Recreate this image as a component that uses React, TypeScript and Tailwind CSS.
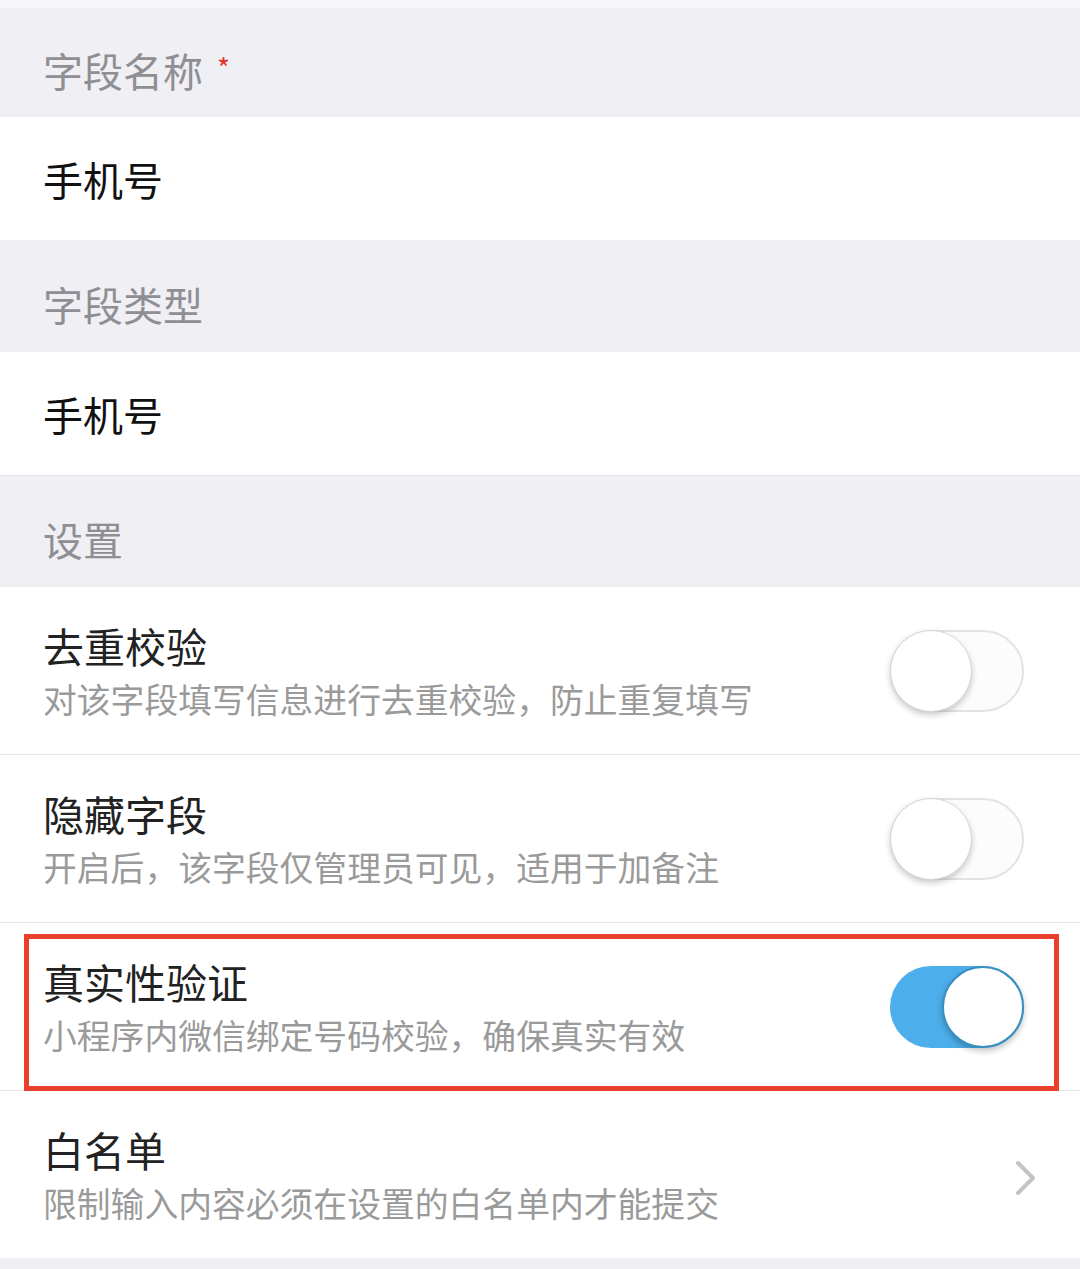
import { ReactNode } from 'react'

const font = { fontFamily: '"Noto Sans CJK SC", "Noto Sans", sans-serif' }

function SectionHeader({ children, h }: { children: ReactNode; h: string }) {
  return (
    <div className={`${h} flex items-center pt-[15px] pl-[43px] bg-[#efeff4] text-[40px] leading-[48px] text-[#8e8e93]`}>
      {children}
    </div>
  )
}

function ValueRow({ text, h }: { text: string; h: string }) {
  return (
    <div className={`${h} flex items-center pt-[1px] pl-[43px] bg-white text-[40px] leading-[48px] text-[#111]`}>
      {text}
    </div>
  )
}

function Toggle({ on }: { on: boolean }) {
  if (on) {
    return (
      <div className="relative w-[134px] h-[82px] rounded-full bg-[#4cafeb]">
        <div className="absolute right-0 top-0 w-[82px] h-[82px] rounded-full bg-white border-2 border-[#3a8fc2] shadow-[0_3px_6px_rgba(0,0,0,0.25)]" />
      </div>
    )
  }
  return (
    <div className="relative w-[134px] h-[82px] rounded-full bg-[#fcfcfc] border-2 border-[#e3e3e3]">
      <div className="absolute -left-[2px] -top-[2px] w-[82px] h-[82px] rounded-full bg-white border border-[#d8d8d8] shadow-[0_3px_6px_rgba(0,0,0,0.22)]" />
    </div>
  )
}

function SettingRow({
  title,
  desc,
  right,
  last,
  highlight,
}: {
  title: string
  desc: string
  right: ReactNode
  last?: boolean
  highlight?: boolean
}) {
  return (
    <div className={`relative bg-white flex items-start ${last ? 'h-[167px]' : 'h-[168px] border-b border-[#e6e6e6]'}`}>
      <div className="flex-1 pl-[43px] pt-[33px]">
        <div className="text-[41px] leading-[50px] text-[#222]">{title}</div>
        <div className="text-[33.8px] leading-[58px] text-[#9a9a9a] whitespace-nowrap">{desc}</div>
      </div>
      <div className="self-center pr-[56px] flex items-center">{right}</div>
      {highlight && (
        <div className="absolute left-[24px] right-[21px] top-[11px] -bottom-[1px] border-[5px] border-[#e8402b]" />
      )}
    </div>
  )
}

function Chevron() {
  return (
    <svg width="24" height="36" viewBox="0 0 24 36" className="mr-[-14px] mt-[6px]">
      <path d="M4 3 L19 18 L4 33" fill="none" stroke="#c4c4c7" strokeWidth="4" strokeLinecap="round" strokeLinejoin="round" />
    </svg>
  )
}

export default function App() {
  return (
    <div className="w-[1080px] h-[1269px] bg-[#efeff4] overflow-hidden" style={font}>
      <div className="h-[8px] bg-[#f7f7f9]" />
      <SectionHeader h="h-[109px]">
        字段名称
        <span className="ml-[14px] text-[28px] text-[#e5322d] -mt-[6px]">*</span>
      </SectionHeader>
      <ValueRow text="手机号" h="h-[123px]" />
      <SectionHeader h="h-[112px]">字段类型</SectionHeader>
      <ValueRow text="手机号" h="h-[124px] border-b border-[#e6e6e6]" />
      <SectionHeader h="h-[111px]">设置</SectionHeader>
      <SettingRow
        title="去重校验"
        desc="对该字段填写信息进行去重校验，防止重复填写"
        right={<Toggle on={false} />}
      />
      <SettingRow
        title="隐藏字段"
        desc="开启后，该字段仅管理员可见，适用于加备注"
        right={<Toggle on={false} />}
      />
      <SettingRow
        title="真实性验证"
        desc="小程序内微信绑定号码校验，确保真实有效"
        right={<Toggle on={true} />}
        highlight
      />
      <SettingRow
        title="白名单"
        desc="限制输入内容必须在设置的白名单内才能提交"
        right={<Chevron />}
        last
      />
    </div>
  )
}
